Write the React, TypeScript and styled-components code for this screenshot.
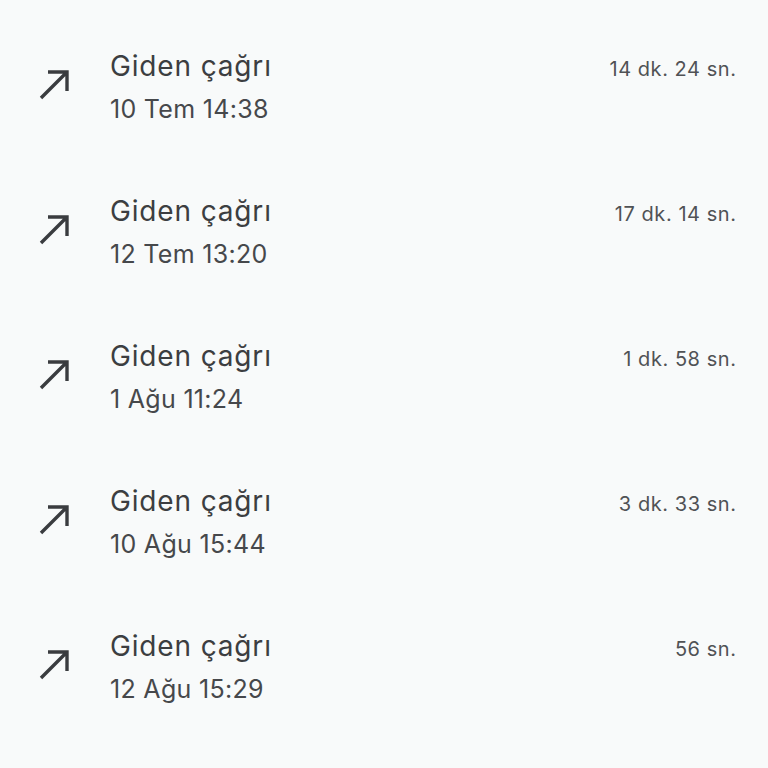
import React from 'react';
import styled, { createGlobalStyle } from 'styled-components';

interface Call {
  date: string;
  duration: string;
}

const calls: Call[] = [
  { date: '10 Tem 14:38', duration: '14 dk. 24 sn.' },
  { date: '12 Tem 13:20', duration: '17 dk. 14 sn.' },
  { date: '1 Ağu 11:24', duration: '1 dk. 58 sn.' },
  { date: '10 Ağu 15:44', duration: '3 dk. 33 sn.' },
  { date: '12 Ağu 15:29', duration: '56 sn.' },
];

const GlobalStyle = createGlobalStyle`
  html, body {
    margin: 0;
    background: #f8fafa;
    font-family: Inter, Roboto, "Noto Sans", sans-serif;
    color: #3f4144;
  }
`;

const List = styled.ul`
  list-style: none;
  margin: 0;
  padding: 15px 32px 0 0;
`;

const Row = styled.li`
  display: flex;
  align-items: center;
  height: 145px;
`;

const IconCell = styled.div`
  width: 110px;
  flex-shrink: 0;
  display: flex;
  padding-left: 36px;
  box-sizing: border-box;
  margin-bottom: 7px;
  color: #3a3c3f;
`;

const Body = styled.div`
  flex: 1;
  display: flex;
  flex-direction: column;
`;

const TitleLine = styled.div`
  display: flex;
  align-items: baseline;
  justify-content: space-between;
`;

const Title = styled.span`
  font-size: 28px;
  line-height: 42px;
  letter-spacing: 0.85px;
  color: #3c3e41;
`;

const Duration = styled.span`
  font-size: 20px;
  letter-spacing: 0.55px;
  margin-right: -0.5px;
  color: #505255;
`;

const Date = styled.span`
  font-size: 25px;
  line-height: 44px;
  letter-spacing: 0.3px;
  color: #46484b;
`;

function OutgoingIcon() {
  return (
    <svg width="36" height="36" viewBox="0 0 36 36" fill="none">
      <path d="M5 32 L31 6 M12 6 H31 V25" stroke="currentColor" strokeWidth="3.4" />
    </svg>
  );
}

export default function App() {
  return (
    <>
      <GlobalStyle />
      <List>
        {calls.map((c) => (
          <Row key={c.date}>
            <IconCell>
              <OutgoingIcon />
            </IconCell>
            <Body>
              <TitleLine>
                <Title>Giden çağrı</Title>
                <Duration>{c.duration}</Duration>
              </TitleLine>
              <Date>{c.date}</Date>
            </Body>
          </Row>
        ))}
      </List>
    </>
  );
}
